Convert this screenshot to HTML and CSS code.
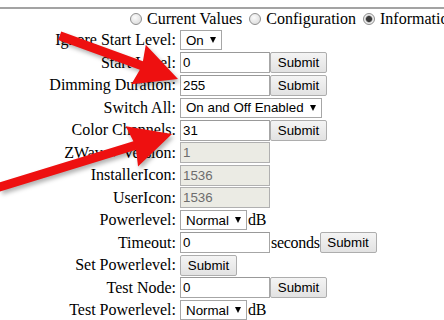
FILE: index.html
```html
<!DOCTYPE html>
<html lang="en">
  <head>
    <meta charset="UTF-8" />
    <title>Node Information</title>
    <link rel="stylesheet" href="styles.css">
  </head>
  <body>
    <div class="panel">
      <div class="modes">
        <label><input type="radio" name="mode" /> Current Values</label>
        <label><input type="radio" name="mode" /> Configuration</label>
        <label><input type="radio" name="mode" checked /> Information</label>
      </div>

      <div class="fields">
        <span class="label">Ignore Start Level:</span>
        <span class="value"><span class="select">On<i class="caret"></i></span></span>

        <span class="label">Start Level:</span>
        <span class="value"><input class="text" value="0" /><button class="btn">Submit</button></span>

        <span class="label">Dimming Duration:</span>
        <span class="value"><input class="text" value="255" /><button class="btn">Submit</button></span>

        <span class="label">Switch All:</span>
        <span class="value"><span class="select">On and Off Enabled<i class="caret"></i></span></span>

        <span class="label">Color Channels:</span>
        <span class="value"><input class="text" value="31" /><button class="btn">Submit</button></span>

        <span class="label">ZWave+ Version:</span>
        <span class="value"><input class="text" value="1" disabled /></span>

        <span class="label">InstallerIcon:</span>
        <span class="value"><input class="text" value="1536" disabled /></span>

        <span class="label">UserIcon:</span>
        <span class="value"><input class="text" value="1536" disabled /></span>

        <span class="label">Powerlevel:</span>
        <span class="value"><span class="select">Normal<i class="caret"></i></span><span class="unit">dB</span></span>

        <span class="label">Timeout:</span>
        <span class="value"><input class="text" value="0" /><span class="unit">seconds</span><button class="btn">Submit</button></span>

        <span class="label">Set Powerlevel:</span>
        <span class="value"><button class="btn">Submit</button></span>

        <span class="label">Test Node:</span>
        <span class="value"><input class="text" value="0" /><button class="btn">Submit</button></span>

        <span class="label">Test Powerlevel:</span>
        <span class="value"><span class="select">Normal<i class="caret"></i></span><span class="unit">dB</span></span>
      </div>

      <!-- annotation arrows drawn over the form -->
      <svg class="arrows" width="444" height="320" viewBox="0 0 444 320">
        <g transform="translate(178 79) rotate(20.1)">
          <polygon points="0,0 -42,-21 -39,-4.5 -126,-4.5 -126,4.5 -39,4.5 -42,21" />
        </g>
        <g transform="translate(172 134) rotate(-17.1)">
          <polygon points="0,0 -42,-21 -39,-4.5 -200,-4.5 -200,4.5 -39,4.5 -42,21" />
        </g>
      </svg>
    </div>
  </body>
</html>
```

FILE: styles.css
```css
body {
  margin: 0;
  background: #fff;
  font-family: "Liberation Serif", "Times New Roman", serif;
  font-size: 16px;
  color: #000;
  overflow: hidden;
}

.panel {
  position: relative;
  margin-top: 7px;
  border-top: 2px solid #a3a3a3;
}

.modes {
  height: 20px;
  padding-left: 127px;
  line-height: 20px;
  white-space: nowrap;
}

.modes input {
  appearance: none;
  width: 12px;
  height: 12px;
  margin: 0 1px 0 3px;
  vertical-align: -1px;
  border: 1px solid #8e8e8e;
  border-radius: 50%;
  background: radial-gradient(circle at 40% 35%, #fbfbfb, #d6d6d6);
}

.modes input:checked {
  background: radial-gradient(circle, #3a3a3a 0 2.6px, #9a9a9a 3.2px, #f2f2f2 4px, #d6d6d6);
}

.fields {
  display: grid;
  grid-template-columns: 176px 1fr;
  grid-auto-rows: 22.5px;
  column-gap: 4px;
  align-items: center;
}

.label {
  text-align: right;
  white-space: nowrap;
}

.value {
  display: flex;
  align-items: center;
  white-space: nowrap;
}

.text,
.btn,
.select {
  font-family: "Liberation Sans", Arial, sans-serif;
  font-size: 13.33px;
  box-sizing: border-box;
}

.text {
  width: 90px;
  height: 21px;
  margin: 0;
  padding: 1px 2px;
  border: 1px solid #a6a6a6;
  border-top-color: #999;
  background: #fff;
  color: #000;
}

.text:disabled {
  background: #ebebe4;
  border-color: #b0b0b0;
  color: #6d6d6d;
}

.btn {
  width: 57px;
  height: 21px;
  margin: 0;
  padding: 0;
  border: 1px solid #adadad;
  border-radius: 2px;
  background: linear-gradient(#f4f4f4, #e2e2e2);
  color: #000;
}

.select {
  display: inline-flex;
  align-items: center;
  height: 20px;
  padding: 0 5px;
  border: 1px solid #a6a6a6;
  background: #fff;
}

.caret {
  width: 0;
  height: 0;
  margin-left: 6px;
  border-left: 3.5px solid transparent;
  border-right: 3.5px solid transparent;
  border-top: 6px solid #000;
}

.unit {
  padding: 0 0 0 1px;
  letter-spacing: -0.3px;
}

.arrows {
  position: absolute;
  left: 0;
  top: -9px;
  pointer-events: none;
  fill: #ee1010;
  filter: drop-shadow(2px 3px 2px rgba(0, 0, 0, 0.3));
}
```
